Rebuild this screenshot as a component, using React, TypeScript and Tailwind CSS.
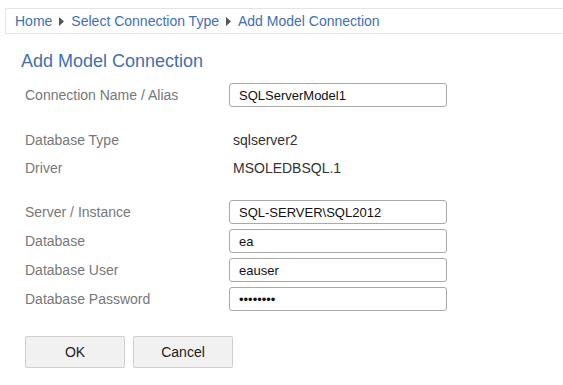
import React from 'react';

const Caret: React.FC = () => (
  <svg className="mx-[7px] h-[9px] w-[5px]" viewBox="0 0 5 9" fill="#555">
    <path d="M0 0l5 4.5L0 9z" />
  </svg>
);

const Field: React.FC<{ label: string; value: string; type?: string }> = ({ label, value, type }) => (
  <div className="flex h-[24px] items-center">
    <div className="w-[204px] text-[14px] text-[#777]">{label}</div>
    <input
      type={type ?? 'text'}
      defaultValue={value}
      className="h-[24px] w-[218px] rounded-[3px] border border-[#a9a9a9] bg-white px-[9px] text-[13px] text-[#111] outline-none"
    />
  </div>
);

const Info: React.FC<{ label: string; value: string }> = ({ label, value }) => (
  <div className="flex h-[24px] items-center text-[14px]">
    <div className="w-[208px] text-[#777]">{label}</div>
    <div className="text-[#333]">{value}</div>
  </div>
);

export default function App() {
  return (
    <div className="h-[385px] w-[563px] overflow-hidden bg-white font-['Liberation_Sans',Arial,sans-serif]">
      <div className="pl-[5px] pt-[8px]">
        <div className="flex h-[26px] items-center border border-r-0 border-[#e4e4e4] pl-[9px] text-[14px] text-[#3f70b0]">
          <span>Home</span>
          <Caret />
          <span>Select Connection Type</span>
          <Caret />
          <span>Add Model Connection</span>
        </div>
      </div>

      <h1 className="ml-[21px] mt-[16px] text-[18px] leading-[22px] text-[#3f70b0]">Add Model Connection</h1>

      <div className="ml-[25px] mt-[11px]">
        <Field label="Connection Name / Alias" value="SQLServerModel1" />

        <div className="mt-[21px] flex flex-col gap-[4px]">
          <Info label="Database Type" value="sqlserver2" />
          <Info label="Driver" value="MSOLEDBSQL.1" />
        </div>

        <div className="mt-[20px] flex flex-col gap-[5px]">
          <Field label="Server / Instance" value="SQL-SERVER\SQL2012" />
          <Field label="Database" value="ea" />
          <Field label="Database User" value="eauser" />
          <Field label="Database Password" value="password" type="password" />
        </div>

        <div className="mt-[25px] flex gap-[8px]">
          <button className="h-[32px] w-[100px] rounded-[2px] border border-[#cfcfcf] bg-[#f1f1f1] text-[14px] text-[#222]">
            OK
          </button>
          <button className="h-[32px] w-[100px] rounded-[2px] border border-[#cfcfcf] bg-[#f1f1f1] text-[14px] text-[#222]">
            Cancel
          </button>
        </div>
      </div>
    </div>
  );
}
